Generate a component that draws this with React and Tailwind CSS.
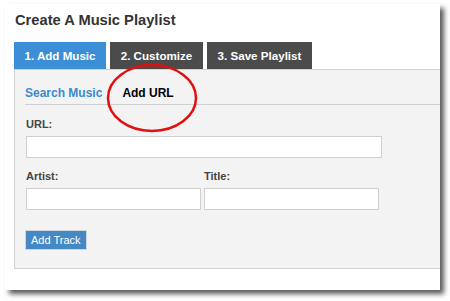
import React from 'react';

export default function App() {
  return (
    <div className="w-[450px] h-[301px] bg-white pt-[4px] pl-[5px] font-['Liberation_Sans',Arial,sans-serif]">
      <div className="relative w-[435px] h-[286px] bg-white shadow-[4px_4px_5px_rgba(0,0,0,0.65)] pl-[9px]">
        <h1 className="pt-[7px] text-[14.7px] font-bold text-[#333] leading-[18px] pl-[1px]">
          Create A Music Playlist
        </h1>

        {/* step tabs */}
        <div className="mt-[13px] flex gap-[4px] h-[27px]">
          <div className="w-[92px] bg-[#3c8fd7] text-white text-[11.6px] font-bold flex items-center justify-center">1. Add Music</div>
          <div className="w-[93px] bg-[#4b4b4b] text-white text-[11.6px] font-bold flex items-center justify-center">2. Customize</div>
          <div className="w-[105px] bg-[#4b4b4b] text-white text-[11.6px] font-bold flex items-center justify-center">3. Save Playlist</div>
        </div>

        <div className="h-[200px] bg-[#f3f3f3] border-l border-t border-b border-[#d2d2d2] pl-[10px]">
          <div className="mt-[13px] flex items-end h-[22px] border-b border-[#cfcfcf] text-[12px] font-bold pb-[2px]">
            <span className="text-[#3a8ad2]">Search Music</span>
            <span className="ml-[20px] text-black">Add URL</span>
          </div>

          <div className="pl-[1px]">
            <label className="block mt-[13px] text-[11px] font-bold text-[#444] leading-[13px]">URL:</label>
            <div className="mt-[5px] w-[356px] h-[22px] bg-white border border-[#cfcfcf]" />

            <div className="mt-[12px] flex gap-[3px]">
              <div>
                <label className="block text-[11px] font-bold text-[#444] leading-[13px]">Artist:</label>
                <div className="mt-[5px] w-[175px] h-[22px] bg-white border border-[#cfcfcf]" />
              </div>
              <div>
                <label className="block text-[11px] font-bold text-[#444] leading-[13px]">Title:</label>
                <div className="mt-[5px] w-[175px] h-[22px] bg-white border border-[#cfcfcf]" />
              </div>
            </div>

            <button className="mt-[20px] -ml-[1px] h-[20px] px-[5px] bg-[#4488c5] border border-[#cfd6dc] text-white text-[11px] leading-[18px]">
              Add Track
            </button>
          </div>
        </div>

        {/* red highlight circle */}
        <svg className="absolute left-[101px] top-[58px]" width="94" height="72" viewBox="0 0 94 72">
          <ellipse cx="46" cy="36" rx="44" ry="33" fill="none" stroke="#e01010" strokeWidth="2.5" />
        </svg>
      </div>
    </div>
  );
}
